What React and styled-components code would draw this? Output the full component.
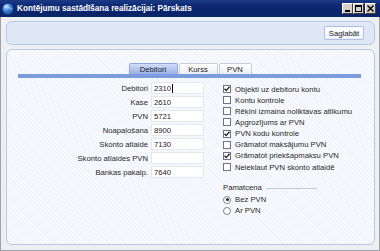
import React from "react";
import styled, { createGlobalStyle } from "styled-components";

const GlobalStyle = createGlobalStyle`
  html, body { margin: 0; padding: 0; }
  body {
    background: #ececec;
    font-family: "Liberation Sans", Arial, sans-serif;
    font-size: 7.7px;
    color: #222;
  }
`;

const Window = styled.div`
  width: 380px;
  height: 251px;
  box-sizing: border-box;
  display: flex;
  flex-direction: column;
  background: #eeeff1;
  border: 1px solid #9fa3aa;
  border-top: none;
`;

const TitleBar = styled.div`
  height: 17px;
  margin: 0 -1px;
  display: flex;
  align-items: center;
  padding: 0 4px 0 2px;
  background: linear-gradient(to bottom, #1b3a86 0%, #0c2670 40%, #0a2468 100%);
  color: #fff;
`;

const Title = styled.span`
  font-weight: bold;
  font-size: 8.2px;
  margin-left: 3px;
  flex: 1;
  white-space: nowrap;
`;

const WinButtons = styled.div`
  display: flex;
  gap: 0;
`;

const WinButton = styled.div`
  width: 11px;
  height: 11px;
  box-sizing: border-box;
  background: #d4d0c8;
  border: 1px solid;
  border-color: #fff #404040 #404040 #fff;
  display: flex;
  align-items: center;
  justify-content: center;
  margin-left: ${(p) => (p.$gap ? "1px" : "0")};
`;

const Body = styled.div`
  flex: 1;
  display: flex;
  flex-direction: column;
  gap: 4px;
  padding: 4px 4px 5px 5px;
`;

const Toolbar = styled.div`
  height: 24px;
  box-sizing: border-box;
  border: 1px solid #b8c9e7;
  border-radius: 6px;
  background: #dde7f6;
  display: flex;
  justify-content: flex-end;
  align-items: center;
  padding-right: 10px;
`;

const SaveButton = styled.div`
  width: 40px;
  height: 14px;
  box-sizing: border-box;
  border: 1px solid #aabfe2;
  border-radius: 2px;
  background: linear-gradient(to bottom, #ffffff, #edf2fb);
  display: flex;
  align-items: center;
  justify-content: center;
  color: #222;
`;

const Panel = styled.div`
  flex: 1;
  box-sizing: border-box;
  border: 1px solid #b8c9e7;
  border-radius: 6px;
  background-color: #f7f9fd;
  background-image: repeating-linear-gradient(
    45deg,
    rgba(200, 212, 235, 0.18) 0px,
    rgba(200, 212, 235, 0.18) 1px,
    transparent 1px,
    transparent 3px
  );
  padding: 13px 13px 0 11px;
  display: flex;
  flex-direction: column;
`;

const TabStrip = styled.div`
  display: flex;
  justify-content: center;
  gap: 1px;
  padding-left: 1px;
`;

const Tab = styled.div`
  width: ${(p) => p.$w}px;
  height: 11px;
  box-sizing: border-box;
  display: flex;
  align-items: center;
  justify-content: center;
  border: 1px solid ${(p) => (p.$active ? "#8ea8dd" : "#c9cfd9")};
  border-bottom: none;
  border-radius: 2px 2px 0 0;
  background: ${(p) =>
    p.$active
      ? "linear-gradient(to bottom, #d3def6, #97b1e8)"
      : "linear-gradient(to bottom, #ffffff, #eceef2)"};
  color: #222;
`;

const TabBar = styled.div`
  height: 4px;
  background: #7d9cdd;
`;

const Content = styled.div`
  display: flex;
  padding-top: 4px;
`;

const Fields = styled.div`
  display: grid;
  grid-template-columns: 130px 53px;
  grid-auto-rows: 12px;
  column-gap: 3px;
  row-gap: 2px;
  align-items: center;
`;

const Label = styled.div`
  text-align: right;
  color: #2a2a2a;
  white-space: nowrap;
`;

const Input = styled.div`
  height: 12px;
  box-sizing: border-box;
  background: #fff;
  border: 1px solid #e3e7ee;
  padding-left: 2px;
  display: flex;
  align-items: center;
  color: #222;
`;

const Caret = styled.span`
  display: inline-block;
  width: 1px;
  height: 9px;
  background: #000;
  margin-left: 1px;
`;

const Options = styled.div`
  margin-left: 19px;
  padding-top: 1.5px;
  display: flex;
  flex-direction: column;
`;

const OptionRow = styled.div`
  height: 11.15px;
  display: flex;
  align-items: center;
  gap: 4px;
  white-space: nowrap;
  color: #2a2a2a;
`;

const Box = styled.div`
  width: 8px;
  height: 8px;
  box-sizing: border-box;
  border: 1px solid #6b7585;
  background: #fff;
  display: flex;
  align-items: center;
  justify-content: center;
`;

const Group = styled.div`
  margin-top: 9px;
  display: flex;
  flex-direction: column;
`;

const GroupHead = styled.div`
  height: 11px;
  display: flex;
  align-items: center;
  gap: 4px;
  color: #2a2a2a;
  margin-bottom: 1.5px;
`;

const GroupLine = styled.div`
  width: 51px;
  height: 1px;
  background: #bcc8dc;
  margin-top: 3px;
`;

const Radio = styled.div`
  width: 8px;
  height: 8px;
  box-sizing: border-box;
  border: 1px solid #7a8597;
  border-radius: 50%;
  background: #fff;
  display: flex;
  align-items: center;
  justify-content: center;
`;

const Dot = styled.div`
  width: 3px;
  height: 3px;
  border-radius: 50%;
  background: #222;
`;

const Check = () => (
  <svg width="6" height="6" viewBox="0 0 6 6">
    <path d="M0.5 2.8 L2.2 4.6 L5.5 0.8" fill="none" stroke="#1d1d1d" strokeWidth="1.3" />
  </svg>
);

const AppIcon = () => (
  <svg width="12" height="12" viewBox="0 0 12 12">
    <defs>
      <radialGradient id="g" cx="35%" cy="30%" r="70%">
        <stop offset="0%" stopColor="#cfe6ff" />
        <stop offset="45%" stopColor="#4a90de" />
        <stop offset="100%" stopColor="#1a4fa8" />
      </radialGradient>
    </defs>
    <circle cx="6" cy="6" r="5.5" fill="url(#g)" />
    <path d="M2.5 4 Q5 2.5 7 4.5 T10 6" fill="none" stroke="#e8f4ff" strokeWidth="0.8" opacity="0.8" />
  </svg>
);

const fields = [
  ["Debitori", "2310", true],
  ["Kase", "2610"],
  ["PVN", "5721"],
  ["Noapaļošana", "8900"],
  ["Skonto atlaide", "7130"],
  ["Skonto atlaides PVN", ""],
  ["Bankas pakalp.", "7640"],
];

const options = [
  ["Objekti uz debitoru kontu", true],
  ["Kontu kontrole", false],
  ["Rēķini izmaina noliktavas atlikumu", false],
  ["Apgrozījums ar PVN", false],
  ["PVN kodu kontrole", true],
  ["Grāmatot maksājumu PVN", false],
  ["Grāmatot priekšapmaksu PVN", true],
  ["Neieklaut PVN skonto atlaidē", false],
];

export default function App() {
  return (
    <>
      <GlobalStyle />
      <Window>
        <TitleBar>
          <AppIcon />
          <Title>Kontējumu sastādīšana realizācijai: Pārskats</Title>
          <WinButtons>
            <WinButton>
              <svg width="6" height="6" viewBox="0 0 6 6">
                <rect x="0" y="4" width="5" height="2" fill="#000" />
              </svg>
            </WinButton>
            <WinButton>
              <svg width="7" height="7" viewBox="0 0 7 7">
                <rect x="0.5" y="0.5" width="6" height="6" fill="none" stroke="#000" />
                <rect x="0" y="0" width="7" height="2" fill="#000" />
              </svg>
            </WinButton>
            <WinButton $gap>
              <svg width="7" height="7" viewBox="0 0 7 7">
                <path d="M0.5 0.5 L6.5 6.5 M6.5 0.5 L0.5 6.5" stroke="#000" strokeWidth="1.4" />
              </svg>
            </WinButton>
          </WinButtons>
        </TitleBar>
        <Body>
          <Toolbar>
            <SaveButton>Saglabāt</SaveButton>
          </Toolbar>
          <Panel>
            <TabStrip>
              <Tab $w={49} $active>Debitori</Tab>
              <Tab $w={39}>Kurss</Tab>
              <Tab $w={33}>PVN</Tab>
            </TabStrip>
            <TabBar />
            <Content>
              <Fields>
                {fields.map(([l, v, c]) => (
                  <React.Fragment key={l}>
                    <Label>{l}</Label>
                    <Input>
                      {v}
                      {c && <Caret />}
                    </Input>
                  </React.Fragment>
                ))}
              </Fields>
              <Options>
                {options.map(([t, on]) => (
                  <OptionRow key={t}>
                    <Box>{on && <Check />}</Box>
                    {t}
                  </OptionRow>
                ))}
                <Group>
                  <GroupHead>
                    Pamatcena
                    <GroupLine />
                  </GroupHead>
                  <OptionRow>
                    <Radio>
                      <Dot />
                    </Radio>
                    Bez PVN
                  </OptionRow>
                  <OptionRow>
                    <Radio />
                    Ar PVN
                  </OptionRow>
                </Group>
              </Options>
            </Content>
          </Panel>
        </Body>
      </Window>
    </>
  );
}
